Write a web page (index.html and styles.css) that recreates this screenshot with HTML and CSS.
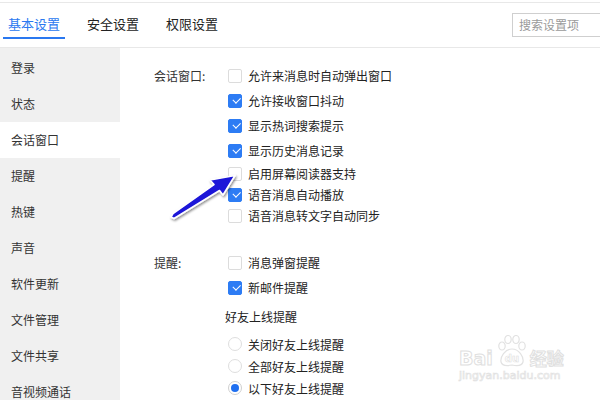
FILE: index.html
```html
<!DOCTYPE html>
<html lang="zh-CN">
<head>
<meta charset="utf-8">
<title>设置</title>
<link rel="stylesheet" href="styles.css">
</head>
<body>
<div class="page">
  <header class="header">
    <nav class="tabs">
      <div class="tab active">基本设置</div>
      <div class="tab">安全设置</div>
      <div class="tab">权限设置</div>
    </nav>
    <div class="search">搜索设置项</div>
  </header>
  <div class="body">
    <aside class="sidebar">
      <div class="side-item">登录</div>
      <div class="side-item">状态</div>
      <div class="side-item active">会话窗口</div>
      <div class="side-item">提醒</div>
      <div class="side-item">热键</div>
      <div class="side-item">声音</div>
      <div class="side-item">软件更新</div>
      <div class="side-item">文件管理</div>
      <div class="side-item">文件共享</div>
      <div class="side-item">音视频通话</div>
    </aside>
    <main class="content">
      <section class="section">
        <div class="label">会话窗口:</div>
        <div class="options">
          <div class="opt"><span class="cb"></span>允许来消息时自动弹出窗口</div>
          <div class="opt"><span class="cb on"></span>允许接收窗口抖动</div>
          <div class="opt"><span class="cb on"></span>显示热词搜索提示</div>
          <div class="opt"><span class="cb on"></span>显示历史消息记录</div>
          <div class="opt compact"><span class="cb"></span>启用屏幕阅读器支持</div>
          <div class="opt compact"><span class="cb on"></span>语音消息自动播放</div>
          <div class="opt compact"><span class="cb"></span>语音消息转文字自动同步</div>
        </div>
      </section>
      <section class="section second">
        <div class="label">提醒:</div>
        <div class="options">
          <div class="opt"><span class="cb"></span>消息弹窗提醒</div>
          <div class="opt"><span class="cb on"></span>新邮件提醒</div>
          <div class="subhead">好友上线提醒</div>
          <div class="opt radio-row"><span class="rd"></span>关闭好友上线提醒</div>
          <div class="opt radio-row"><span class="rd"></span>全部好友上线提醒</div>
          <div class="opt radio-row"><span class="rd on"></span>以下好友上线提醒</div>
        </div>
      </section>
    </main>
  </div>

  <svg class="arrow" width="600" height="400" viewBox="0 0 600 400">
    <defs>
      <filter id="sh" x="-20%" y="-20%" width="140%" height="140%">
        <feDropShadow dx="1" dy="1.5" stdDeviation="1.2" flood-color="#000" flood-opacity="0.45"/>
      </filter>
    </defs>
    <path d="M171 217 L173 213.5 L214 184.5 L210 180 L235 175.5 L223 195 L219.5 190.5 L174 218.5 Z"
          fill="#1a14d8" stroke="#ffffff" stroke-width="1.6" stroke-linejoin="round" filter="url(#sh)"/>
  </svg>

  <div class="watermark">
    <div class="wm-top">
      <span class="wm-bai">Bai</span>
      <svg class="wm-paw" width="30" height="32" viewBox="0 0 30 32">
        <g fill="none" stroke="#e2e2e2" stroke-width="1.2">
          <ellipse cx="5" cy="11" rx="3.2" ry="4"/>
          <ellipse cx="11" cy="4.5" rx="3.2" ry="4"/>
          <ellipse cx="19" cy="4.5" rx="3.2" ry="4"/>
          <ellipse cx="25" cy="11" rx="3.2" ry="4"/>
          <path d="M15 14 C8 14 3 22 4 27 C5 31 10 31 15 30 C20 31 25 31 26 27 C27 22 22 14 15 14 Z"/>
        </g>
        <text x="15" y="27" text-anchor="middle" class="wm-du">du</text>
      </svg>
      <span class="wm-jy">经验</span>
    </div>
    <div class="wm-url">jingyan.baidu.com</div>
  </div>
</div>
</body>
</html>
```

FILE: styles.css
```css
* { box-sizing: border-box; }
html, body { margin: 0; padding: 0; background: #fff; }
body {
  font-family: "Noto Sans CJK SC", "Noto Sans", sans-serif;
  color: #333;
  font-size: 12px;
}
.page {
  position: relative;
  width: 600px;
  height: 400px;
  overflow: hidden;
}
.header {
  margin-top: 2px;
  height: 46px;
  border-top: 1px solid #e8e8e8;
  border-bottom: 1px solid #e8e8e8;
  display: flex;
  align-items: flex-start;
  padding-left: 3px;
}
.tabs { display: flex; gap: 17px; }
.tab {
  padding: 13px 5px 5px;
  line-height: 16px;
  font-size: 13px;
  color: #222;
  border-bottom: 2px solid transparent;
}
.tab.active { color: #2a78f0; border-bottom-color: #2a78f0; }
.search {
  margin-left: auto;
  margin-top: 10px;
  margin-right: -12px;
  width: 100px;
  height: 24px;
  border: 1px solid #cfcfcf;
  color: #9a9a9a;
  font-size: 12px;
  line-height: 22px;
  padding-left: 6px;
}
.body { display: flex; height: 352px; }
.sidebar {
  width: 120px;
  background: #f0f0f0;
  padding-top: 2px;
}
.side-item {
  height: 36px;
  line-height: 36px;
  padding-left: 11px;
  color: #333;
}
.side-item.active { background: #fff; }
.content {
  flex: 1;
  padding: 15px 0 0 34px;
}
.section {
  display: grid;
  grid-template-columns: 74px 1fr;
}
.section.second { margin-top: 24px; }
.label { line-height: 25px; height: 25px; color: #333; }
.opt {
  display: flex;
  align-items: center;
  gap: 6px;
  height: 25px;
  color: #222;
}
.opt.compact { height: 21px; }
.cb {
  width: 14px;
  height: 14px;
  border: 1px solid #dcdcdc;
  border-radius: 2px;
  background: #fff;
  position: relative;
  flex: none;
}
.cb.on { background: #2d7cf4; border-color: #2d7cf4; }
.cb.on::after {
  content: "";
  position: absolute;
  left: 3.5px;
  top: 2.5px;
  width: 6px;
  height: 3.5px;
  border-left: 1.2px solid #fff;
  border-bottom: 1.2px solid #fff;
  transform: rotate(-45deg);
}
.subhead {
  height: 33px;
  line-height: 33px;
  margin-left: -3px;
  color: #222;
}
.radio-row { height: 22px; }
.rd {
  width: 14px;
  height: 14px;
  border: 1px solid #dedede;
  border-radius: 50%;
  background: #fff;
  position: relative;
  flex: none;
}
.rd.on { border-color: #cfcfcf; }
.rd.on::after {
  content: "";
  position: absolute;
  left: 2px;
  top: 2px;
  width: 8px;
  height: 8px;
  border-radius: 50%;
  background: #1f6ff0;
}
.arrow {
  position: absolute;
  left: 0;
  top: 0;
  pointer-events: none;
}
.watermark {
  position: absolute;
  left: 459px;
  top: 334px;
  width: 110px;
  pointer-events: none;
}
.wm-top { display: flex; align-items: flex-end; height: 33px; }
.wm-bai, .wm-jy {
  font-family: "DejaVu Sans", sans-serif;
  font-weight: bold;
  font-size: 19px;
  line-height: 18px;
  color: #fff;
  -webkit-text-stroke: 1px #e0e0e0;
}
.wm-jy { font-family: "Noto Sans CJK SC", sans-serif; font-size: 17px; margin-left: 3px; }
.wm-paw { margin-left: 4px; display: block; }
.wm-du {
  font-family: "DejaVu Sans", sans-serif;
  font-weight: bold;
  font-size: 10px;
  fill: #fff;
  stroke: #e0e0e0;
  stroke-width: 0.6px;
}
.wm-url {
  font-family: "DejaVu Sans", sans-serif;
  font-size: 11px;
  line-height: 14px;
  margin-top: 2px;
  color: #fff;
  -webkit-text-stroke: 0.7px #e2e2e2;
}
```
